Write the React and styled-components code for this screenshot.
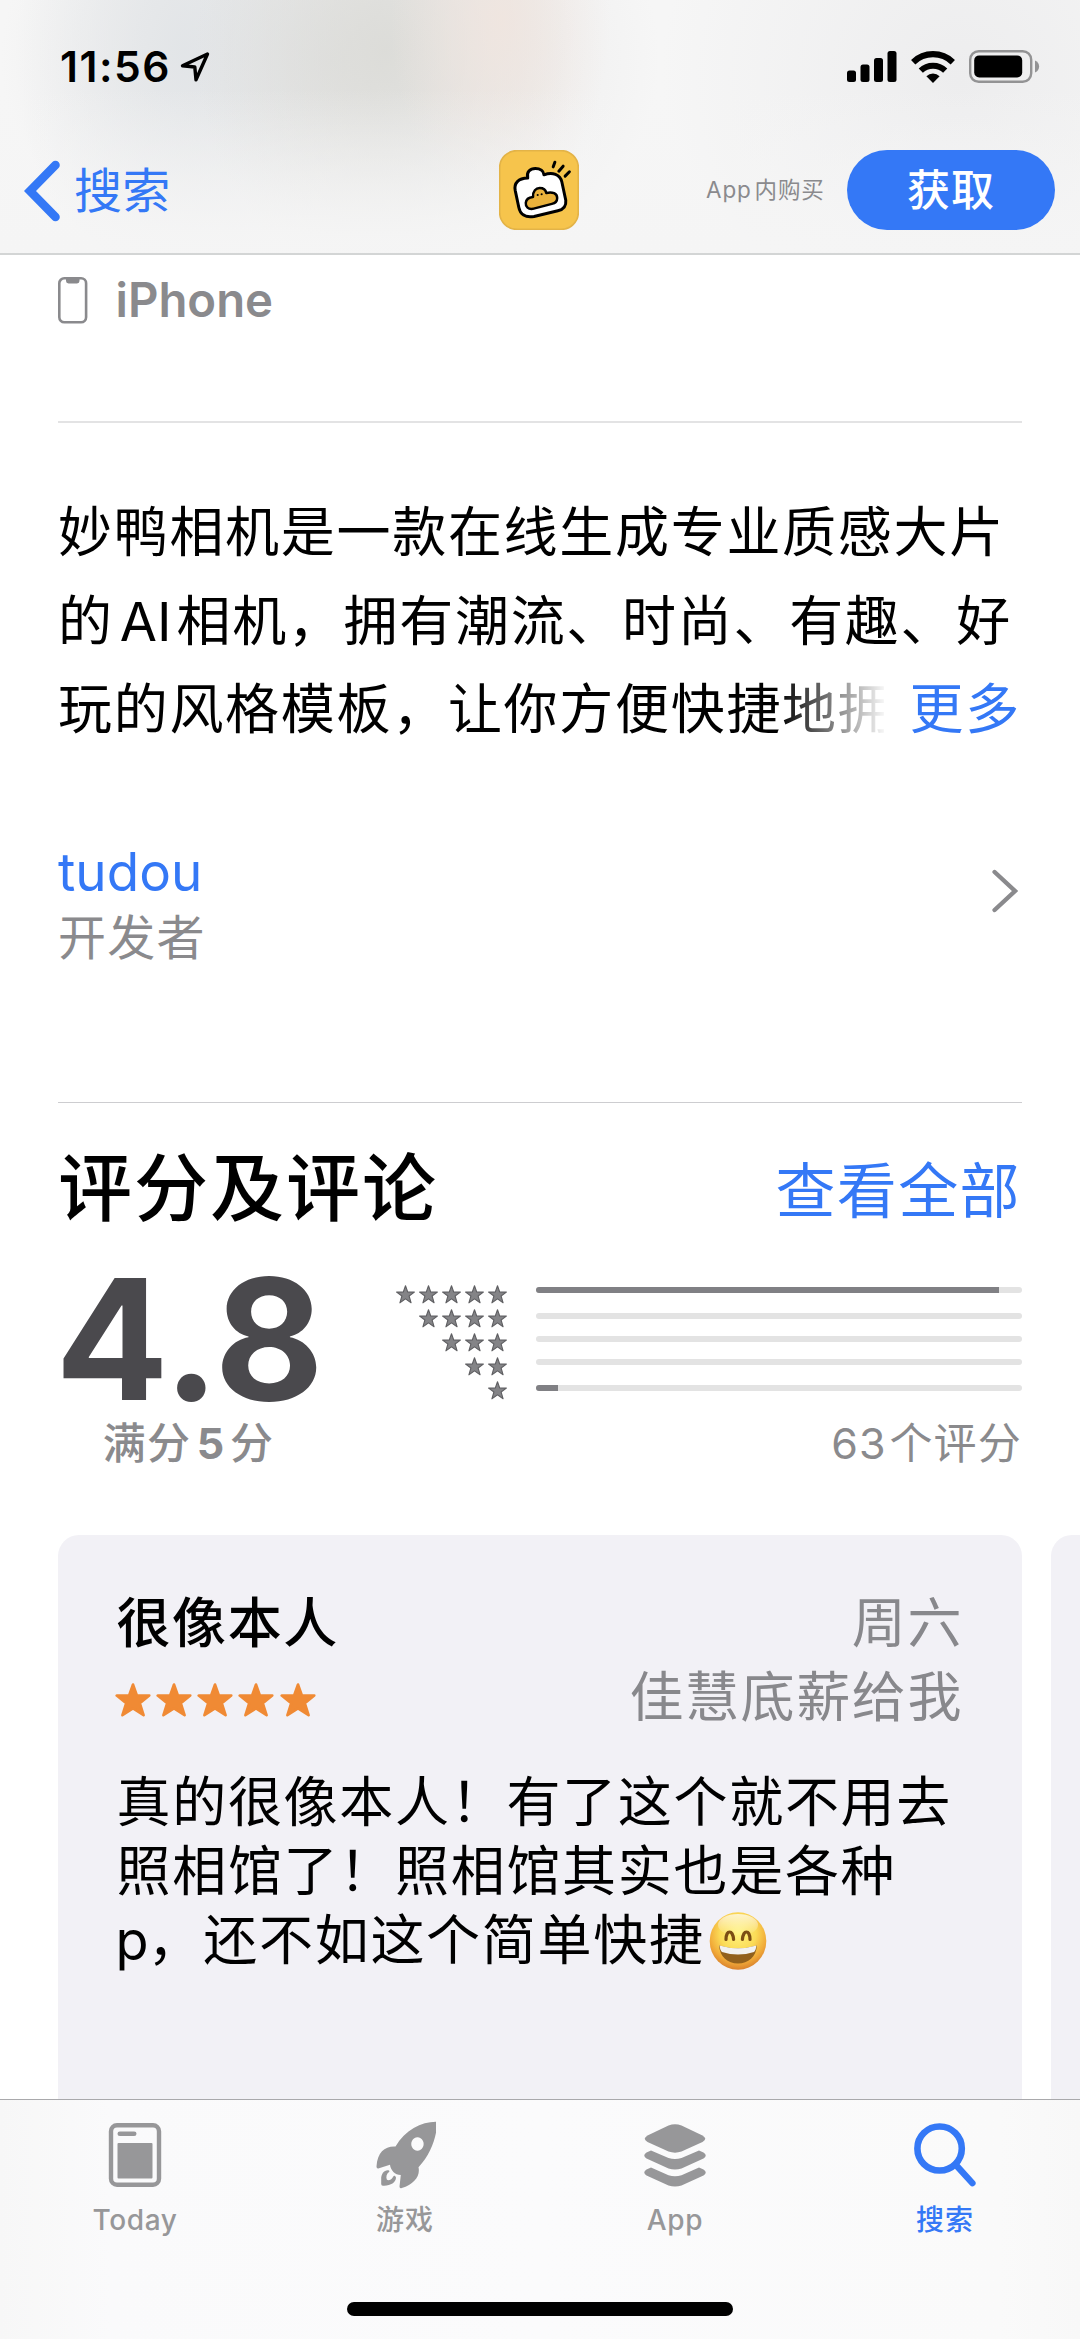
import React from "react";
import styled, { createGlobalStyle } from "styled-components";

const BLUE = "#3478f6";
const GRAY = "#8a8a8d";

const GlobalStyle = createGlobalStyle`
  * { box-sizing: border-box; }
  body {
    margin: 0;
    background: #fff;
    font-family: Inter, "Noto Sans CJK SC", "Liberation Sans", sans-serif;
    color: #000;
  }
  svg { display: block; flex: none; }
`;

const Screen = styled.div`
  width: 1080px;
  height: 2339px;
  display: flex;
  flex-direction: column;
  overflow: hidden;
  background: #fff;
`;

const Header = styled.header`
  height: 255px;
  flex: none;
  border-bottom: 2px solid #d3d5d5;
  background:
    linear-gradient(to bottom, rgba(245, 245, 245, 0) 35%, rgba(245, 245, 245, 0.95) 96%),
    radial-gradient(ellipse 110px 190px at 500px 20px, rgba(240, 229, 223, 0.9), rgba(240, 229, 223, 0) 100%),
    radial-gradient(ellipse 190px 230px at 385px 50px, rgba(219, 219, 215, 0.9), rgba(219, 219, 215, 0) 100%),
    radial-gradient(ellipse 170px 250px at 185px 50px, rgba(225, 228, 231, 0.9), rgba(225, 228, 231, 0) 100%),
    radial-gradient(ellipse 330px 260px at 330px 60px, rgba(226, 226, 226, 0.9), rgba(226, 226, 226, 0) 100%),
    radial-gradient(ellipse 300px 300px at 960px 80px, rgba(237, 237, 238, 1), rgba(237, 237, 238, 0) 100%),
    #f6f6f6;
`;

const StatusBar = styled.div`
  height: 133px;
  padding: 0 40px 0 60px;
  display: flex;
  align-items: center;
`;

const Clock = styled.span`
  font-size: 42.5px;
  font-weight: 600;
  line-height: 50px;
  letter-spacing: 1.5px;
  width: 120px;
  white-space: nowrap;
`;

const StatusIcons = styled.div`
  margin-left: auto;
  display: flex;
  align-items: center;
  gap: 14px;
`;

const NavBar = styled.nav`
  height: 114px;
  padding: 0 25.5px 0 24px;
  display: grid;
  grid-template-columns: 1fr 80px 1fr;
  align-items: center;
`;

const Back = styled.div`
  display: flex;
  align-items: center;
  gap: 13px;
  padding-top: 1px;
  color: ${BLUE};
  font-size: 48px;
  line-height: 60px;
  letter-spacing: 0.2px;
`;

const NavActions = styled.div`
  display: flex;
  align-items: center;
  justify-content: flex-end;
  gap: 22px;
`;

const Purchase = styled.span`
  font-size: 22.5px;
  line-height: 30px;
  letter-spacing: 0.8px;
  color: ${GRAY};
  white-space: nowrap;
`;

const GetButton = styled.button`
  width: 208px;
  height: 80px;
  padding: 0 0 1px 1px;
  border: 0;
  border-radius: 40px;
  background: ${BLUE};
  color: #fff;
  font: inherit;
  font-size: 43px;
  font-weight: 500;
  line-height: 50px;
  letter-spacing: 1px;
`;

const Content = styled.main`
  flex: 1;
  min-height: 0;
  overflow: hidden;
  padding: 22px 58px 0;
`;

const Device = styled.div`
  height: 46px;
  display: flex;
  align-items: center;
  gap: 27.5px;
  color: ${GRAY};
  font-size: 47.3px;
  font-weight: 600;
  line-height: 46px;
`;

const Divider = styled.div`
  height: ${(p) => p.$size}px;
  margin-top: ${(p) => p.$gap}px;
  background: ${(p) => p.$color};
`;

const Description = styled.div`
  margin-top: 66px;
  font-size: 54px;
  line-height: 88.5px;
  letter-spacing: 1.7px;
  white-space: nowrap;
`;

const Line = styled.div`
  display: flex;
  justify-content: space-between;
`;

const Latin = styled.span`
  margin: 0 ${(p) => p.$right}px 0 ${(p) => p.$left}px;
  letter-spacing: ${(p) => p.$track || 0}px;
`;

const Faded = styled.span`
  width: 826px;
  mask-image: linear-gradient(to right, #000 720px, transparent 830px);
`;

const More = styled.span`
  color: ${BLUE};
  margin-right: 1px;
`;

const Developer = styled.div`
  margin-top: 84px;
  display: flex;
  align-items: flex-start;
  justify-content: space-between;
  padding-right: 4px;
`;

const DeveloperChevron = styled.div`
  padding-top: 30px;
`;

const DeveloperName = styled.div`
  font-size: 53px;
  line-height: 66px;
  color: ${BLUE};
`;

const DeveloperRole = styled.div`
  font-size: 48px;
  line-height: 65px;
  letter-spacing: 1.3px;
  color: ${GRAY};
`;

const SectionHead = styled.div`
  margin-top: 42px;
  height: 86px;
  display: flex;
  align-items: flex-start;
  justify-content: space-between;
`;

const SectionTitle = styled.h2`
  margin: 0;
  font-size: 74px;
  font-weight: 500;
  line-height: 86px;
  letter-spacing: 2px;
`;

const SeeAll = styled.span`
  padding-top: 3px;
  color: ${BLUE};
  font-size: 60px;
  line-height: 86px;
  letter-spacing: 1.4px;
  margin-right: 1px;
`;

const Ratings = styled.div`
  margin-top: 28px;
  display: flex;
`;

const Score = styled.div`
  width: 263px;
  display: flex;
  flex-direction: column;
  align-items: center;
`;

const ScoreValue = styled.div`
  height: 161px;
  line-height: 160px;
  font-size: 168px;
  font-weight: 700;
  color: #4a494d;
`;

const ScoreLabel = styled.div`
  font-size: 43px;
  font-weight: 500;
  line-height: 46px;
  letter-spacing: 1.2px;
  margin-right: 2px;
  color: ${GRAY};
  white-space: nowrap;
`;

const Five = styled.b`
  font-weight: 700;
  margin: 0 4.5px 0 5.5px;
`;

const Histogram = styled.div`
  flex: 1;
  padding-top: 26px;
  display: grid;
  grid-template-columns: 1fr 486px;
  grid-template-rows: 135px 46px;
  column-gap: 29px;
`;

const StarRows = styled.div`
  display: flex;
  flex-direction: column;
  align-items: flex-end;
`;

const StarRow = styled.div`
  height: 24px;
  display: flex;
  gap: 4px;
`;

const Bars = styled.div`
  padding-top: 2px;
`;

const Bar = styled.div`
  height: 6px;
  margin-bottom: ${(p) => p.$after}px;
  border-radius: 3px;
  overflow: hidden;
  background: #e3e3e3;
`;

const BarFill = styled.div`
  height: 6px;
  width: ${(p) => p.$value}%;
  background: #808084;
`;

const RatingCount = styled.div`
  grid-column: 1 / 3;
  text-align: right;
  font-size: 43px;
  line-height: 46px;
  letter-spacing: 1.2px;
  color: ${GRAY};
`;

const Reviews = styled.div`
  margin-top: 69px;
  display: flex;
  gap: 29px;
`;

const Card = styled.article`
  width: 964px;
  height: 640px;
  flex: none;
  padding: 52px 60px 0 58.5px;
  border-radius: 21px;
  background: #f2f1f6;
`;

const CardRow = styled.div`
  height: 74px;
  display: flex;
  align-items: center;
  justify-content: space-between;
  font-size: 54px;
  line-height: 74px;
  letter-spacing: 1.6px;
`;

const CardTitle = styled.span`
  font-weight: 500;
`;

const Muted = styled.span`
  color: #88888c;
  margin-right: -1px;
`;

const Stars = styled.div`
  display: flex;
  gap: 5.3px;
  margin: 5px 0 0 -2px;
`;

const Body = styled.p`
  margin: 33px 0 0;
  font-size: 54px;
  line-height: 69.3px;
  letter-spacing: 1.7px;
  white-space: nowrap;
`;

const BodyLine = styled.span`
  display: flex;
  align-items: center;
  height: 69.3px;
`;

const TabBar = styled.footer`
  height: 240px;
  flex: none;
  border-top: 1px solid #a9a9ac;
  background: linear-gradient(to right, #f7f7f7, #fafafb 110px, #fbfbfc 50%, #fafafa 1000px, #f8f8f8);
  display: flex;
  flex-direction: column;
  align-items: center;
`;

const Tabs = styled.div`
  width: 1080px;
  height: 202px;
  display: grid;
  grid-template-columns: repeat(4, 270px);
`;

const Tab = styled.div`
  display: flex;
  flex-direction: column;
  align-items: center;
  padding-top: 21px;
  color: ${(p) => (p.$active ? BLUE : "#979799")};
  font-size: 28px;
  font-weight: 500;
  letter-spacing: ${(p) => p.$track}px;
`;

const TabLabel = styled.span`
  margin-top: 12px;
  line-height: 38px;
`;

const HomeIndicator = styled.div`
  width: 386px;
  height: 14px;
  border-radius: 7px;
  background: #000;
`;

const LocationIcon = () => (
  <svg width="30" height="30" viewBox="0 0 30 30">
    <path d="M27.5 2 L2.5 13.8 L14.8 15 L16 27.8 Z" fill="none" stroke="#000" strokeWidth="3.4" strokeLinejoin="round" />
  </svg>
);

const SignalIcon = () => (
  <svg width="50" height="32" viewBox="0 0 50 32">
    <rect x="0" y="19.5" width="9" height="11.5" rx="2.5" />
    <rect x="13.5" y="13.5" width="9" height="17.5" rx="2.5" />
    <rect x="27" y="7" width="9" height="24" rx="2.5" />
    <rect x="40.5" y="0" width="9" height="31" rx="2.5" />
  </svg>
);

const WifiIcon = () => (
  <svg width="44" height="32" viewBox="0 0 44 32">
    <path d="M2.2 11.2 A28.5 28.5 0 0 1 41.8 11.2" fill="none" stroke="#000" strokeWidth="6.2" />
    <path d="M9.8 19.6 A17.5 17.5 0 0 1 34.2 19.6" fill="none" stroke="#000" strokeWidth="6" />
    <path d="M22 32 L15.4 25.2 A9.4 9.4 0 0 1 28.6 25.2 Z" />
  </svg>
);

const BatteryIcon = () => (
  <svg width="71" height="33" viewBox="0 0 71 33">
    <rect x="1.2" y="1.2" width="61" height="30.6" rx="8.5" fill="none" stroke="#939394" strokeWidth="2.4" />
    <rect x="5.2" y="5.4" width="48" height="22" rx="5" />
    <path d="M66 10.5 C71.5 12.5 71.5 20.5 66 22.5 Z" fill="#939394" />
  </svg>
);

const BackIcon = () => (
  <svg width="37" height="62" viewBox="0 0 37 62">
    <path d="M31.5 5 L6 31 L31.5 57" fill="none" stroke={BLUE} strokeWidth="8.6" strokeLinecap="round" strokeLinejoin="miter" />
  </svg>
);

const DuckLogo = () => (
  <svg width="80" height="80" viewBox="28 28 242 242">
    <rect x="30" y="30" width="238" height="238" rx="52" fill="#f6c44c" stroke="#e3b347" strokeWidth="5" />
    <path
      d="M77 150 C73 128 86 114 115 113 C110 95 122 84 138 84 C153 84 163 92 164 103 C190 93 213 102 218 124 L230 180 C232 199 224 208 206 212 L134 229 C107 234 92 222 88 202 Z"
      fill="#fff"
      stroke="#000"
      strokeWidth="9"
      strokeLinejoin="round"
    />
    <path
      d="M131 170 C130 152 140 143 151 143 C162 143 169 148 171 158 C190 153 204 160 204 173 C204 184 198 189 188 191 L130 206 C117 208 108 200 109 188 C110 177 119 171 131 170 Z"
      fill="#eab23c"
      stroke="#000"
      strokeWidth="7.5"
      strokeLinejoin="round"
    />
    <circle cx="145" cy="164" r="3.2" />
    <circle cx="157" cy="162" r="3.2" />
    <path d="M192 79 L197 65 M209 92 L222 77 M228 107 L241 94" stroke="#000" strokeWidth="9" strokeLinecap="round" />
  </svg>
);

const PhoneIcon = () => (
  <svg width="30" height="47" viewBox="0 0 30 47">
    <rect x="1.3" y="1.3" width="26.8" height="44" rx="5" fill="none" stroke={GRAY} strokeWidth="2.6" />
    <path d="M8 1 H21.5 V4 Q21.5 6.4 19 6.4 H10.5 Q8 6.4 8 4 Z" fill={GRAY} />
  </svg>
);

const Chevron = () => (
  <svg width="26" height="44" viewBox="0 0 26 44">
    <path d="M2.6 3 L23 22 L2.6 41" fill="none" stroke={GRAY} strokeWidth="4.4" strokeLinecap="round" strokeLinejoin="miter" />
  </svg>
);

const SmallStar = () => (
  <svg width="19" height="19" viewBox="0 0 19 19">
    <path
      d="M9.5 0.8 L11.7 7 L18.4 7.1 L13.1 11 L15.1 17.8 L9.5 13.9 L3.9 17.8 L5.9 11 L0.6 7.1 L7.3 7 Z"
      fill="#848487"
      stroke="#5f5f62"
      strokeWidth="1.1"
      strokeLinejoin="round"
    />
  </svg>
);

const BigStar = () => (
  <svg width="36" height="34" viewBox="0 0 36 34">
    <path
      d="M18 1.5 L21.9 12.4 L34.3 12.6 L24.8 20.2 L28.6 32.2 L18 25.4 L7.4 32.2 L11.2 20.2 L1.7 12.6 L14.1 12.4 Z"
      fill="#f08a34"
      stroke="#f08a34"
      strokeWidth="2.6"
      strokeLinejoin="round"
    />
  </svg>
);

const GrinIcon = styled.svg`
  margin-left: 4px;
`;

const Grin = () => (
  <GrinIcon width="58" height="60" viewBox="0 0 58 60">
    <defs>
      <radialGradient id="face" cx="0.5" cy="0.36" r="0.64">
        <stop offset="0" stopColor="#fff47e" />
        <stop offset="0.5" stopColor="#fbdb57" />
        <stop offset="0.8" stopColor="#f1aa38" />
        <stop offset="1" stopColor="#d9812d" />
      </radialGradient>
      <linearGradient id="shine" x1="0" y1="0" x2="0" y2="1">
        <stop offset="0" stopColor="#fff" stopOpacity="0.7" />
        <stop offset="1" stopColor="#fff" stopOpacity="0" />
      </linearGradient>
    </defs>
    <ellipse cx="29" cy="30" rx="28.3" ry="28.8" fill="url(#face)" />
    <ellipse cx="29" cy="14" rx="20" ry="11" fill="url(#shine)" />
    <path d="M17 28.5 C17.2 18.5 23.8 18.5 24.6 28.5 M33.4 28.5 C34.2 18.5 40.8 18.5 41 28.5" fill="none" stroke="#7b4d14" strokeWidth="3.2" strokeLinecap="round" />
    <path d="M10 34.5 Q29 40 48 34.5 C47 46 39.5 52.5 29 52.5 C18.5 52.5 11 46 10 34.5 Z" fill="#91601d" />
    <path d="M10.5 34.5 Q29 40 47.5 34.5 C47 38 46.2 40 45 41 Q29 46 13 41 C11.8 40 11 38 10.5 34.5 Z" fill="#f1f1f1" />
  </GrinIcon>
);

const TodayIcon = () => (
  <svg width="62" height="68" viewBox="0 0 62 68">
    <rect x="7" y="4.2" width="48" height="59.6" rx="6" fill="none" stroke="currentColor" strokeWidth="4.4" />
    <rect x="13.5" y="10.5" width="19" height="4.6" rx="2.3" fill="currentColor" />
    <rect x="13.5" y="22" width="35" height="35.5" rx="1" fill="currentColor" />
  </svg>
);

const RocketIcon = () => (
  <svg width="62" height="68" viewBox="-2 0 62 68">
    <path
      fillRule="evenodd"
      fill="currentColor"
      d="M60.5 .8 C46 .5 29 9 19.5 25.6 C9 25 1.500 31 .5 45.5 Q.5 48 3 47.2 L14 43.7 C14.5 49 19 54 24.8 54 L23.5 65.5 Q23.5 67.8 25.8 67 C38 63 44.5 55 42.5 46.3 C55 33 61 15 61 1.800 Q61 .8 60.500 .8 Z M41.500 16.3 A6.2 6.7 0 1 1 41.4 16.3 Z"
    />
    <path
      fill="currentColor"
      d="M13 49.5 C8.5 48.5 5 53 5.2 58 V63 Q5.2 64.8 7 64.7 C14 65.2 20 61.5 20 56.5 C19 54 17.8 54.5 17 56 C15 59.5 12 60 10.8 58.5 C9.8 56 10.5 52.5 13 51 Q14 50 13 49.5 Z"
    />
  </svg>
);

const StackIcon = () => (
  <svg width="62" height="68" viewBox="0 0 62 68">
    <g fill="currentColor">
      <path d="M24.5 4.5 Q31 2 37.5 4.5 L58.5 14.5 Q64 17.8 58.5 21 L37.5 30.5 Q31 32.8 24.5 30.5 L3.5 21 Q-2 17.8 3.5 14.5 Z" />
      <path d="M2.5 31.5 L7 29.6 L24.5 37 Q31 39 37.5 37 L55 29.6 L59.5 31.5 Q64 34.5 59.5 37.5 L37.5 47.5 Q31 49.5 24.5 47.5 L2.5 37.5 Q-2 34.5 2.5 31.5 Z" />
      <path d="M2.5 48.5 L7 46.6 L24.5 54.2 Q31 56.2 37.5 54.2 L55 46.6 L59.5 48.5 Q64 51.5 59.5 54.5 L37.5 64.5 Q31 66.5 24.5 64.5 L2.5 54.5 Q-2 51.5 2.5 48.5 Z" />
    </g>
  </svg>
);

const SearchIcon = () => (
  <svg width="62" height="68" viewBox="0 0 62 68">
    <ellipse cx="25.6" cy="27.5" rx="22.2" ry="22" fill="none" stroke="currentColor" strokeWidth="6.6" />
    <path d="M41.5 43.5 L58.4 62.2" stroke="currentColor" strokeWidth="6.4" strokeLinecap="round" />
  </svg>
);

const starRows = [5, 4, 3, 2, 1];
const bars = [
  { value: 95.3, after: 20 },
  { value: 0, after: 17 },
  { value: 0, after: 17 },
  { value: 0, after: 20 },
  { value: 4.6, after: 0 },
];
const tabs = [
  { label: "Today", Icon: TodayIcon, track: 0.6 },
  { label: "游戏", Icon: RocketIcon, track: 0.9 },
  { label: "App", Icon: StackIcon, track: 0.6 },
  { label: "搜索", Icon: SearchIcon, track: 0.9, active: true },
];

export default function App() {
  return (
    <Screen>
      <GlobalStyle />
      <Header>
        <StatusBar>
          <Clock>11:56</Clock>
          <LocationIcon />
          <StatusIcons>
            <SignalIcon />
            <WifiIcon />
            <BatteryIcon />
          </StatusIcons>
        </StatusBar>
        <NavBar>
          <Back>
            <BackIcon />
            <span>搜索</span>
          </Back>
          <DuckLogo />
          <NavActions>
            <Purchase>
              <Latin $left={0} $right={3} $track={0.8}>App</Latin>
              内购买
            </Purchase>
            <GetButton>获取</GetButton>
          </NavActions>
        </NavBar>
      </Header>

      <Content>
        <Device>
          <PhoneIcon />
          iPhone
        </Device>
        <Divider $gap={98} $size={2} $color="#e3e3e4" />
        <Description>
          <Line>妙鸭相机是一款在线生成专业质感大片</Line>
          <Line>
            <span>
              的<Latin $left={6} $right={5}>AI</Latin>相机，拥有潮流、时尚、有趣、好
            </span>
          </Line>
          <Line>
            <Faded>玩的风格模板，让你方便快捷地拥</Faded>
            <More>更多</More>
          </Line>
        </Description>
        <Developer>
          <div>
            <DeveloperName>tudou</DeveloperName>
            <DeveloperRole>开发者</DeveloperRole>
          </div>
          <DeveloperChevron>
            <Chevron />
          </DeveloperChevron>
        </Developer>
        <Divider $gap={132} $size={1} $color="#cdcdd0" />

        <SectionHead>
          <SectionTitle>评分及评论</SectionTitle>
          <SeeAll>查看全部</SeeAll>
        </SectionHead>
        <Ratings>
          <Score>
            <ScoreValue>4.8</ScoreValue>
            <ScoreLabel>
              满分<Five>5</Five>分
            </ScoreLabel>
          </Score>
          <Histogram>
            <StarRows>
              {starRows.map((n) => (
                <StarRow key={n}>
                  {Array.from({ length: n }, (_, i) => (
                    <SmallStar key={i} />
                  ))}
                </StarRow>
              ))}
            </StarRows>
            <Bars>
              {bars.map((b, i) => (
                <Bar key={i} $after={b.after}>
                  <BarFill $value={b.value} />
                </Bar>
              ))}
            </Bars>
            <RatingCount>
              63<Latin $left={2.5} $right={0} $track={1.2}>个评分</Latin>
            </RatingCount>
          </Histogram>
        </Ratings>

        <Reviews>
          <Card>
            <CardRow>
              <CardTitle>很像本人</CardTitle>
              <Muted>周六</Muted>
            </CardRow>
            <CardRow>
              <Stars>
                {[0, 1, 2, 3, 4].map((i) => (
                  <BigStar key={i} />
                ))}
              </Stars>
              <Muted>佳慧底薪给我</Muted>
            </CardRow>
            <Body>
              <BodyLine>真的很像本人！有了这个就不用去</BodyLine>
              <BodyLine>照相馆了！照相馆其实也是各种</BodyLine>
              <BodyLine>
                <Latin $left={-1} $right={-1}>p</Latin>，还不如这个简单快捷
                <Grin />
              </BodyLine>
            </Body>
          </Card>
          <Card />
        </Reviews>
      </Content>

      <TabBar>
        <Tabs>
          {tabs.map(({ label, Icon, track, active }) => (
            <Tab key={label} $active={active} $track={track}>
              <Icon />
              <TabLabel>{label}</TabLabel>
            </Tab>
          ))}
        </Tabs>
        <HomeIndicator />
      </TabBar>
    </Screen>
  );
}
